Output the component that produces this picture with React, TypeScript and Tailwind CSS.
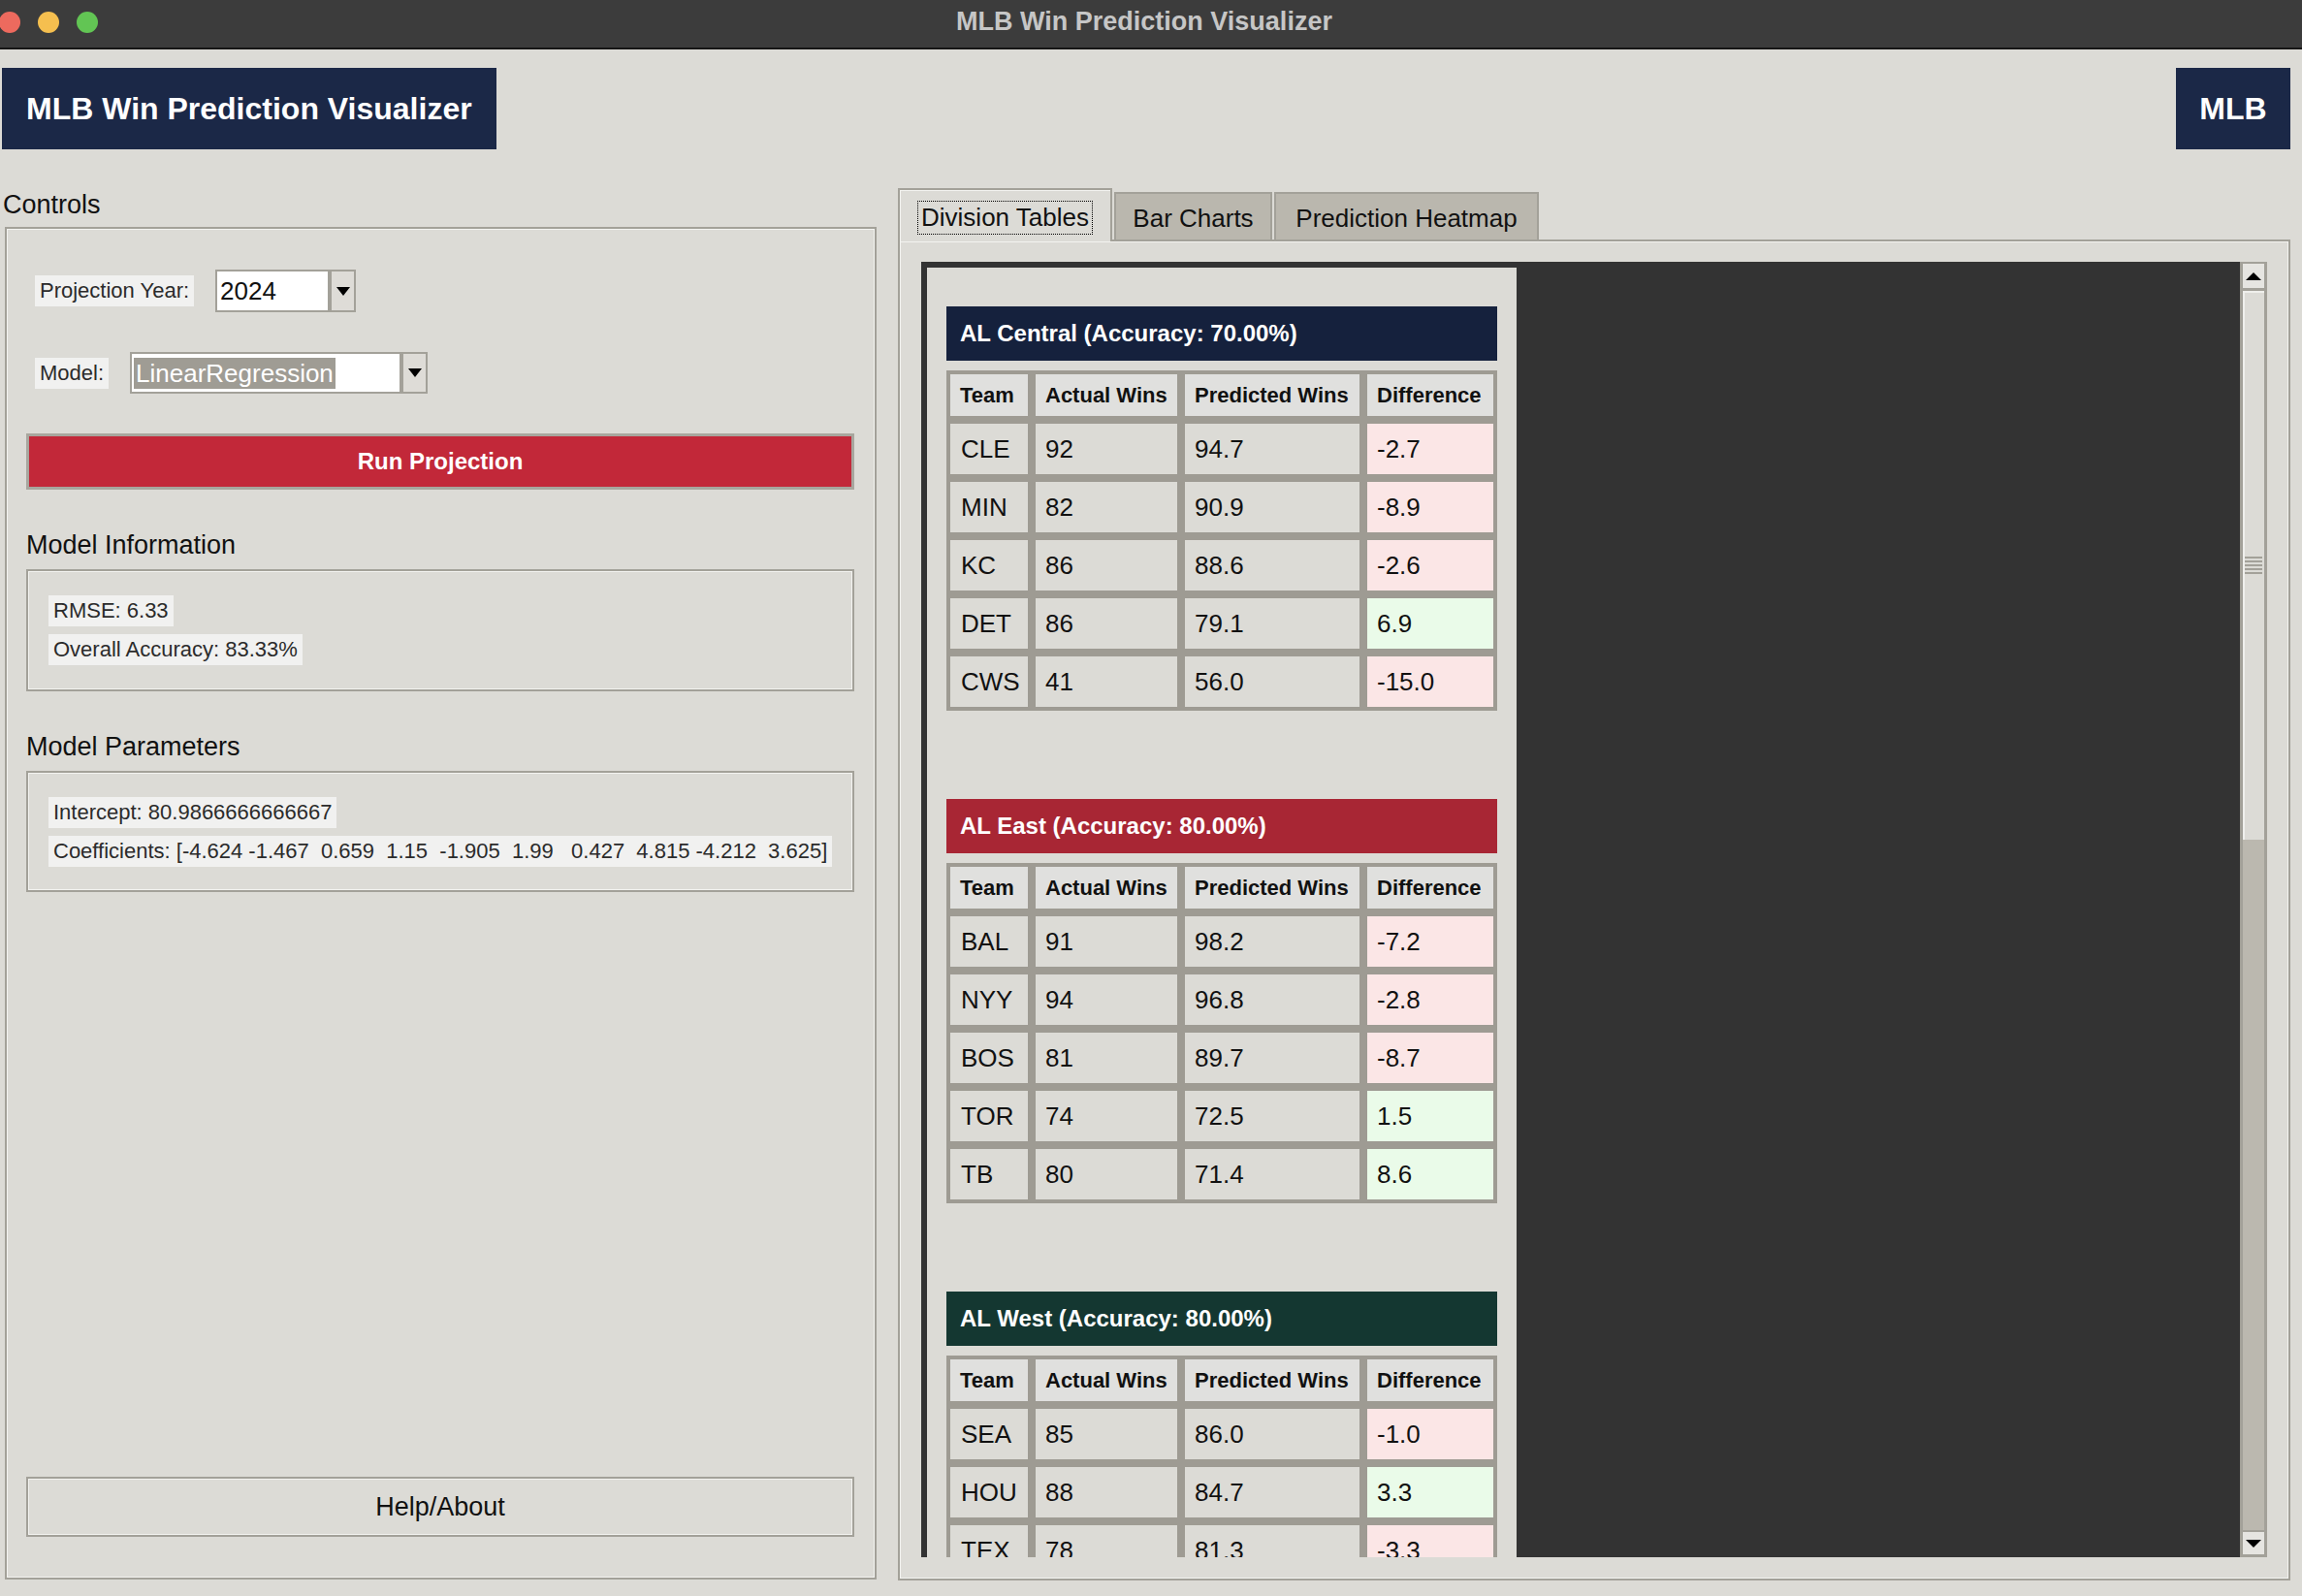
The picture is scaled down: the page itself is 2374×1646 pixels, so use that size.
type Row = { team: string; actual: string; predicted: string; diff: string };

type Division = { name: string; accuracy: string; headerClass: string; rows: Row[] };

const divisions: Division[] = [
  {
    name: 'AL Central',
    accuracy: '70.00%',
    headerClass: 'bg-[#15213d]',
    rows: [
      { team: 'CLE', actual: '92', predicted: '94.7', diff: '-2.7' },
      { team: 'MIN', actual: '82', predicted: '90.9', diff: '-8.9' },
      { team: 'KC', actual: '86', predicted: '88.6', diff: '-2.6' },
      { team: 'DET', actual: '86', predicted: '79.1', diff: '6.9' },
      { team: 'CWS', actual: '41', predicted: '56.0', diff: '-15.0' },
    ],
  },
  {
    name: 'AL East',
    accuracy: '80.00%',
    headerClass: 'bg-[#a82634]',
    rows: [
      { team: 'BAL', actual: '91', predicted: '98.2', diff: '-7.2' },
      { team: 'NYY', actual: '94', predicted: '96.8', diff: '-2.8' },
      { team: 'BOS', actual: '81', predicted: '89.7', diff: '-8.7' },
      { team: 'TOR', actual: '74', predicted: '72.5', diff: '1.5' },
      { team: 'TB', actual: '80', predicted: '71.4', diff: '8.6' },
    ],
  },
  {
    name: 'AL West',
    accuracy: '80.00%',
    headerClass: 'bg-[#143731]',
    rows: [
      { team: 'SEA', actual: '85', predicted: '86.0', diff: '-1.0' },
      { team: 'HOU', actual: '88', predicted: '84.7', diff: '3.3' },
      { team: 'TEX', actual: '78', predicted: '81.3', diff: '-3.3' },
    ],
  },
];

const headers = ['Team', 'Actual Wins', 'Predicted Wins', 'Difference'];

function DownTriangle() {
  return (
    <svg width="14" height="9" viewBox="0 0 14 9">
      <polygon points="0,0 14,0 7,9" fill="#000" />
    </svg>
  );
}

function Combo({ value, entryWidth, selected }: { value: string; entryWidth: string; selected?: boolean }) {
  return (
    <div className="flex h-full">
      <div className={`${entryWidth} h-full bg-white border-2 border-[#a3a199] flex items-center pl-[2px] text-[26px] leading-none`}>
        {selected ? (
          <span className="h-[32px] flex items-center bg-[#9f9c94] text-white px-[2px]">{value}</span>
        ) : (
          <span className="pl-[1px]">{value}</span>
        )}
      </div>
      <div className="w-[27px] h-full border-2 border-[#a3a199] bg-[#dedcd7] flex items-center justify-center">
        <DownTriangle />
      </div>
    </div>
  );
}

function InfoLabel({ children }: { children: React.ReactNode }) {
  return (
    <div className="h-[32px] flex items-center px-[5px] bg-[#f1f1f0] text-[22px] text-[#2b2b2b] leading-none whitespace-pre">
      {children}
    </div>
  );
}

function DivisionTable({ division }: { division: Division }) {
  return (
    <div>
      <div className={`h-[56px] ${division.headerClass} flex items-center pl-[14px] text-[24px] font-bold text-white`}>
        {division.name} (Accuracy: {division.accuracy})
      </div>
      <div className="mt-[10px] grid grid-cols-[88px_154px_188px_138px]">
        {headers.map((h) => (
          <div
            key={h}
            className="h-[51px] border-4 border-[#9e9b93] bg-[#e0e0de] flex items-center pl-[10px] text-[22px] font-bold text-[#111]"
          >
            {h}
          </div>
        ))}
        {division.rows.map((r) => {
          const negative = r.diff.startsWith('-');
          return [
            <div key={r.team + 't'} className="h-[60px] border-4 border-[#9e9b93] bg-[#dcdbd6] flex items-center pl-[11px] text-[26px]">
              {r.team}
            </div>,
            <div key={r.team + 'a'} className="h-[60px] border-4 border-[#9e9b93] bg-[#dcdbd6] flex items-center pl-[10px] text-[26px]">
              {r.actual}
            </div>,
            <div key={r.team + 'p'} className="h-[60px] border-4 border-[#9e9b93] bg-[#dcdbd6] flex items-center pl-[10px] text-[26px]">
              {r.predicted}
            </div>,
            <div
              key={r.team + 'd'}
              className={`h-[60px] border-4 border-[#9e9b93] flex items-center pl-[10px] text-[26px] ${negative ? 'bg-[#fbe6e6]' : 'bg-[#eafbe9]'}`}
            >
              {r.diff}
            </div>,
          ];
        })}
      </div>
    </div>
  );
}

export default function App() {
  return (
    <div className="w-[2374px] h-[1646px] overflow-hidden bg-[#dcdbd6] font-['Liberation_Sans',Arial,sans-serif] text-[#111]">
      {/* window title bar */}
      <div className="h-[51px] bg-[#3c3c3c] border-b-2 border-[#161616] grid grid-cols-[1fr_auto_1fr] items-center">
        <div className="flex gap-[18px] ml-[-1px] -mt-[3px]">
          <span className="w-[22px] h-[22px] rounded-full bg-[#ed6a5e]" />
          <span className="w-[22px] h-[22px] rounded-full bg-[#f5bf4f]" />
          <span className="w-[22px] h-[22px] rounded-full bg-[#62c554]" />
        </div>
        <span className="text-[27px] font-bold text-[#c6c6c6] pr-[14px] -mt-[4px]">MLB Win Prediction Visualizer</span>
        <div />
      </div>

      {/* header */}
      <div className="flex justify-between items-start pt-[19px] pl-[2px] pr-[12px]">
        <div className="h-[84px] px-[25px] flex items-center bg-[#1b2847] text-white text-[32px] font-bold">
          MLB Win Prediction Visualizer
        </div>
        <div className="h-[84px] w-[118px] flex items-center justify-center bg-[#1b2847] text-white text-[32px] font-bold">
          MLB
        </div>
      </div>

      <div className="flex pl-[3px]">
        {/* controls */}
        <div className="w-[901px]">
          <div className="mt-[42px] h-[31px] text-[27px] leading-[31px]">Controls</div>
          <div className="mt-[7px] ml-[2px] w-[899px] h-[1395px] border-2 border-[#a3a199] shadow-[inset_0_0_0_1px_#f3f3f0] flex flex-col pl-[20px] pr-[21px]">
            <div className="mt-[42px] h-[44px] pl-[9px] flex items-center gap-[22px]">
              <InfoLabel>Projection Year:</InfoLabel>
              <Combo value="2024" entryWidth="w-[118px]" />
            </div>
            <div className="mt-[41px] h-[43px] pl-[9px] flex items-center gap-[22px]">
              <InfoLabel>Model:</InfoLabel>
              <Combo value="LinearRegression" entryWidth="w-[280px]" selected />
            </div>
            <button className="mt-[41px] h-[58px] w-full border-[3px] border-[#a8a69e] bg-[#c22839] text-white text-[24px] font-bold">
              Run Projection
            </button>

            <div className="mt-[42px] h-[31px] text-[27px] leading-[31px]">Model Information</div>
            <div className="mt-[9px] h-[126px] border-2 border-[#a3a199] shadow-[inset_0_0_0_1px_#f3f3f0] pt-[25px] pl-[21px] flex flex-col items-start gap-[8px]">
              <InfoLabel>RMSE: 6.33</InfoLabel>
              <InfoLabel>Overall Accuracy: 83.33%</InfoLabel>
            </div>

            <div className="mt-[42px] h-[31px] text-[27px] leading-[31px]">Model Parameters</div>
            <div className="mt-[9px] h-[125px] border-2 border-[#a3a199] shadow-[inset_0_0_0_1px_#f3f3f0] pt-[25px] pl-[21px] flex flex-col items-start gap-[8px]">
              <InfoLabel>Intercept: 80.9866666666667</InfoLabel>
              <InfoLabel>{'Coefficients: [-4.624 -1.467  0.659  1.15  -1.905  1.99   0.427  4.815 -4.212  3.625]'}</InfoLabel>
            </div>

            <button className="mt-auto mb-[42px] h-[62px] w-full border-2 border-[#a3a199] shadow-[inset_0_0_0_1px_#f3f3f0] text-[27px]">
              Help/About
            </button>
          </div>
        </div>

        {/* notebook */}
        <div className="ml-[22px] w-[1436px] mt-[40px]">
          <div className="h-[53px] flex items-end">
            <div className="relative z-10 -mb-[2px] w-[221px] h-[55px] bg-[#dcdbd6] border-2 border-b-0 border-[#a3a199] shadow-[inset_1px_1px_0_#f3f3f0] flex items-center justify-center pt-[3px]">
              <span className="h-[35px] px-[3px] flex items-center border border-dotted border-black text-[26px] leading-none">
                Division Tables
              </span>
            </div>
            <div className="ml-[2px] w-[163px] h-[49px] bg-[#bab7ae] border-2 border-b-0 border-[#a3a199] flex items-center justify-center pt-[3px] text-[26px]">
              Bar Charts
            </div>
            <div className="ml-[2px] w-[273px] h-[49px] bg-[#bab7ae] border-2 border-b-0 border-[#a3a199] flex items-center justify-center pt-[3px] text-[26px]">
              Prediction Heatmap
            </div>
          </div>

          <div className="h-[1383px] border-2 border-[#a3a199] shadow-[inset_0_0_0_1px_#f3f3f0] pt-[21px] px-[22px] pb-[22px] flex">
            <div className="flex-1 h-full bg-[#333333] overflow-hidden pl-[6px] pt-[6px]">
              <div className="w-[608px] bg-[#dcdbd6] pt-[40px] px-[20px] pb-[60px] flex flex-col gap-[91px]">
                {divisions.map((d) => (
                  <DivisionTable key={d.name} division={d} />
                ))}
              </div>
            </div>

            {/* scrollbar */}
            <div className="w-[28px] h-full flex flex-col border-[3px] border-t-2 border-[#a3a199] bg-[#bbb8af]">
              <div className="h-[28px] bg-[#e6e5e1] border-b-[3px] border-[#a3a199] flex items-center justify-center">
                <svg width="16" height="8" viewBox="0 0 16 8">
                  <polygon points="8,0 16,8 0,8" fill="#000" />
                </svg>
              </div>
              <div className="h-[566px] bg-[#dcdbd6] shadow-[inset_2px_2px_0_#efefec] flex flex-col items-center justify-center gap-[2px]">
                <span className="w-[18px] h-[2px] bg-[#a3a199]" />
                <span className="w-[18px] h-[2px] bg-[#a3a199]" />
                <span className="w-[18px] h-[2px] bg-[#a3a199]" />
                <span className="w-[18px] h-[2px] bg-[#a3a199]" />
                <span className="w-[18px] h-[2px] bg-[#a3a199]" />
              </div>
              <div className="flex-1" />
              <div className="h-[25px] bg-[#e6e5e1] border-t-2 border-[#a3a199] flex items-center justify-center">
                <svg width="16" height="8" viewBox="0 0 16 8">
                  <polygon points="0,0 16,0 8,8" fill="#000" />
                </svg>
              </div>
            </div>
          </div>
        </div>
      </div>
    </div>
  );
}
